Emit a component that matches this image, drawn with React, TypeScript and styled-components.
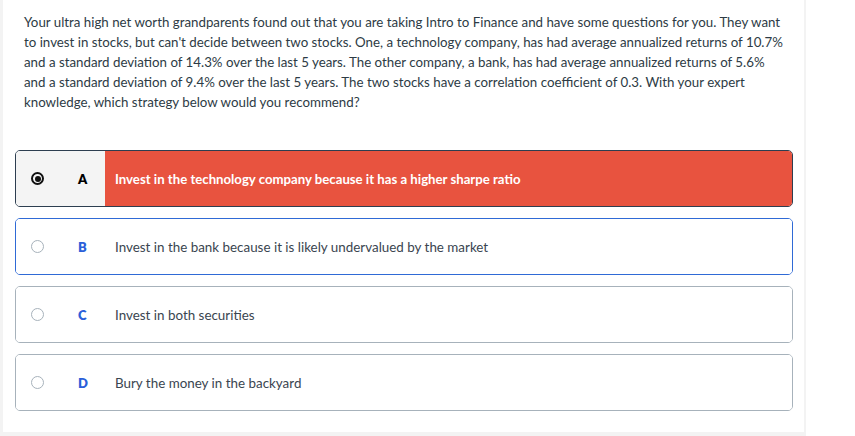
import React from "react"
import styled, { createGlobalStyle } from "styled-components"

const GlobalStyle = createGlobalStyle`
  html, body {
    margin: 0;
    padding: 0;
    background: #fff;
  }
  body {
    font-family: Lato, "Open Sans", sans-serif;
  }
`

const Frame = styled.div`
  width: 806px;
  height: 436px;
  box-sizing: border-box;
  background: #f3f3f3;
  padding: 0 2px 4px 3px;
`

const Card = styled.div`
  height: 100%;
  background: #fff;
  box-sizing: border-box;
  padding: 12px 11px 0 12px;
`

const Question = styled.p`
  margin: 0 0 38px 9px;
  font-size: 13.3px;
  line-height: 20px;
  color: #2d3b45;
  white-space: nowrap;
`

const OptionList = styled.div`
  display: flex;
  flex-direction: column;
  gap: 11px;
`

type Tone = "selected" | "focus" | "plain"

const borderFor = (t: Tone) =>
  t === "selected" ? "#2d3e50" : t === "focus" ? "#2f6ad6" : "#a7b2bb"

const OptionRow = styled.div<{ $tone: Tone }>`
  display: flex;
  height: 57px;
  box-sizing: border-box;
  border: 1px solid ${(p) => borderFor(p.$tone)};
  border-radius: 5px;
  overflow: hidden;
  background: #fff;
`

const Lead = styled.div<{ $tone: Tone }>`
  width: 89px;
  flex-shrink: 0;
  display: flex;
  align-items: center;
  background: ${(p) => (p.$tone === "selected" ? "#f4f4f4" : "#fff")};
`

const Radio = styled.span<{ $checked: boolean }>`
  width: 13px;
  height: 13px;
  margin-left: 15px;
  border-radius: 50%;
  box-sizing: border-box;
  border: ${(p) => (p.$checked ? "2px solid #111" : "1.5px solid #a7b2bb")};
  display: flex;
  align-items: center;
  justify-content: center;
  &::after {
    content: "";
    display: ${(p) => (p.$checked ? "block" : "none")};
    width: 6px;
    height: 6px;
    border-radius: 50%;
    background: #111;
  }
`

const Letter = styled.span<{ $checked: boolean }>`
  margin-left: 34px;
  font-size: 13px;
  font-weight: 800;
  color: ${(p) => (p.$checked ? "#000" : "#2b5fd9")};
`

const Answer = styled.div<{ $checked: boolean }>`
  flex: 1;
  display: flex;
  align-items: center;
  padding-left: 10px;
  font-size: ${(p) => (p.$checked ? "13.2px" : "13.4px")};
  font-weight: ${(p) => (p.$checked ? 700 : 400)};
  color: ${(p) => (p.$checked ? "#fff" : "#3a4550")};
  background: ${(p) => (p.$checked ? "#e8533f" : "#fff")};
`

const lines = [
  "Your ultra high net worth grandparents found out that you are taking Intro to Finance and have some questions for you. They want",
  "to invest in stocks, but can't decide between two stocks. One, a technology company, has had average annualized returns of 10.7%",
  "and a standard deviation of 14.3% over the last 5 years. The other company, a bank, has had average annualized returns of 5.6%",
  "and a standard deviation of 9.4% over the last 5 years. The two stocks have a correlation coefficient of 0.3. With your expert",
  "knowledge, which strategy below would you recommend?",
]

const options: { key: string; text: string; tone: Tone }[] = [
  { key: "A", text: "Invest in the technology company because it has a higher sharpe ratio", tone: "selected" },
  { key: "B", text: "Invest in the bank because it is likely undervalued by the market", tone: "focus" },
  { key: "C", text: "Invest in both securities", tone: "plain" },
  { key: "D", text: "Bury the money in the backyard", tone: "plain" },
]

export default function App() {
  return (
    <>
      <GlobalStyle />
      <Frame>
        <Card>
          <Question>
            {lines.map((l, i) => (
              <React.Fragment key={i}>
                {l}
                {i < lines.length - 1 && <br />}
              </React.Fragment>
            ))}
          </Question>
          <OptionList>
            {options.map((o) => {
              const checked = o.tone === "selected"
              return (
                <OptionRow key={o.key} $tone={o.tone}>
                  <Lead $tone={o.tone}>
                    <Radio $checked={checked} />
                    <Letter $checked={checked}>{o.key}</Letter>
                  </Lead>
                  <Answer $checked={checked}>{o.text}</Answer>
                </OptionRow>
              )
            })}
          </OptionList>
        </Card>
      </Frame>
    </>
  )
}
